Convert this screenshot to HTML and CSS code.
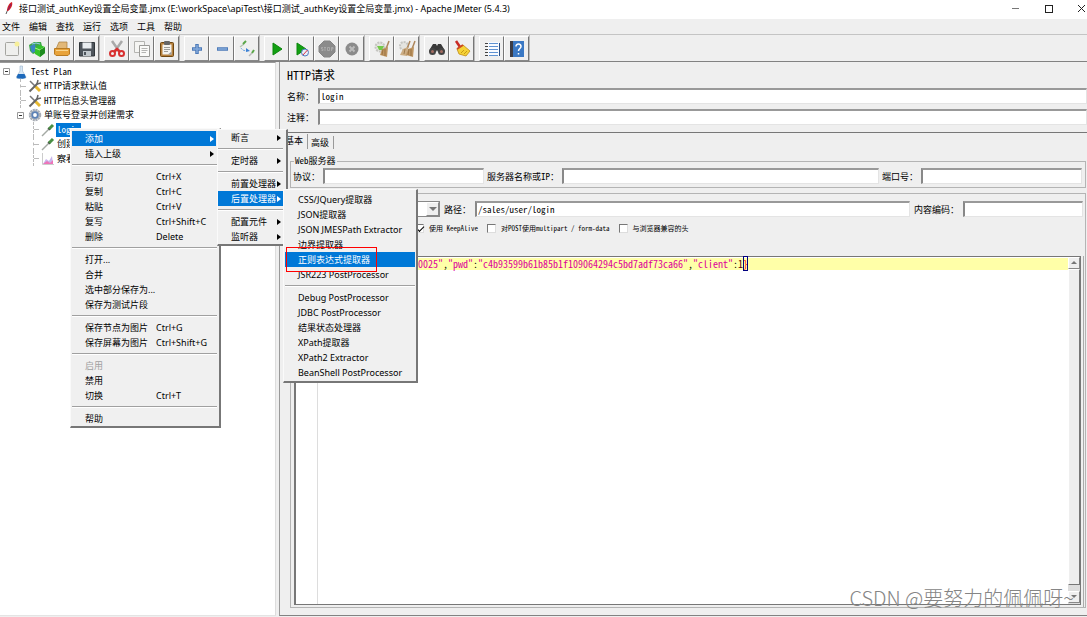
FILE: index.html
```html
<!DOCTYPE html>
<html lang="zh-CN">
<head>
<meta charset="utf-8">
<title>Apache JMeter (5.4.3)</title>
<link rel="stylesheet" href="styles.css">
</head>
<body>
<header class="titlebar">
  <svg class="feather" viewBox="0 0 10 14"><path d="M2 13L4 8" stroke="#555" fill="none"/><path d="M3 10C3 6 5 2 8 1C9 4 7 8 4 10Z" fill="#d22128"/><path d="M4 9L7 3" stroke="#6d2077" stroke-width=".8"/></svg>
  <h1 class="title">接口测试_authKey设置全局变量.jmx (E:\workSpace\apiTest\接口测试_authKey设置全局变量.jmx) - Apache JMeter (5.4.3)</h1>
  <div class="win-buttons">
    <button class="win" aria-label="最小化"><svg viewBox="0 0 9 9"><path d="M1 4.5H8" stroke="#777" fill="none"/></svg></button>
    <button class="win" aria-label="最大化"><svg viewBox="0 0 9 9"><rect x="1.500" y="1.500" width="7" height="7" stroke="#222" fill="none"/></svg></button>
    <button class="win" aria-label="关闭"><svg viewBox="0 0 9 9"><path d="M1 1L8 8M8 1L1 8" stroke="#222" fill="none"/></svg></button>
  </div>
</header>
<nav class="menubar">
  <button>文件</button><button>编辑</button><button>查找</button><button>运行</button><button>选项</button><button>工具</button><button>帮助</button>
</nav>
<div class="toolbar">
  <div class="group">
    <button class="tool" aria-label="新建"><svg viewBox="0 0 18 18"><rect x="2.500" y="2.500" width="13" height="13" rx="1" fill="#efefed" stroke="#a5a5a0"/><circle cx="14" cy="4" r="2.500" fill="#f7ef9a"/></svg></button>
    <button class="tool" aria-label="模板"><svg viewBox="0 0 18 18"><path d="M1 5L6 2L13 2L14 6L12 11L5 14L2 11Z" fill="#3fa648"/><path d="M2 6L7 4L8 11L4 13Z" fill="#3a86c4"/><path d="M4 4L8 3L12 4" stroke="#8fd0e8" fill="none"/><path d="M7 8L12 5L17 7V13L12 17L7 14Z" fill="#35c22a"/><path d="M7 8L12 10L17 7" stroke="#a9ee8e" fill="none"/><path d="M12 10L17 7V13L12 17Z" fill="#1f8c20"/></svg></button>
    <button class="tool" aria-label="打开"><svg viewBox="0 0 18 18"><path d="M3 9L6 2H14V10Z" fill="#e2b878" stroke="#a87c3c" stroke-width=".7"/><path d="M1.500 8.500H16.500V14L15 15.500H3L1.500 14Z" fill="#e8a33b" stroke="#b87b22"/><path d="M3 10.500H15" stroke="#f9d68f"/></svg></button>
    <button class="tool" aria-label="保存"><svg viewBox="0 0 18 18"><path d="M1.500 2.500H16.500V16H1.500Z" fill="#4e555c" stroke="#30363a"/><path d="M4.500 2.500H13.500V8.500H4.500Z" fill="#e9edf0"/><path d="M5 11H13V16H5Z" fill="#c1c8cd"/><path d="M6 12H8V15H6Z" fill="#4e555c"/></svg></button>
  </div>
  <div class="group">
    <button class="tool" aria-label="剪切"><svg viewBox="0 0 18 18"><path d="M4 1L11 11M14 1L7 11" stroke="#a9a9a9" stroke-width="2.500" fill="none"/><ellipse cx="4.500" cy="13.500" rx="2.500" ry="2.500" fill="none" stroke="#d83030" stroke-width="2"/><ellipse cx="13.500" cy="13.500" rx="2.500" ry="2.500" fill="none" stroke="#d83030" stroke-width="2"/><path d="M6 12L9 9L12 12" stroke="#d83030" stroke-width="2.500" fill="none"/></svg></button>
    <button class="tool" aria-label="复制"><svg viewBox="0 0 18 18"><path d="M1.500 1.500H11.500V12.500H1.500Z" fill="#f5f5f3" stroke="#b4b4b1"/><path d="M6.500 5.500H16.500V16.500H6.500Z" fill="#fafaf8" stroke="#9a9a97"/><path d="M8.500 8.500H14.500M8.500 10.500H14.500M8.500 12.500H13" stroke="#b4b4b2"/></svg></button>
    <button class="tool" aria-label="粘贴"><svg viewBox="0 0 18 18"><rect x="2.500" y="2.500" width="13" height="14" rx="1" fill="#b6803c" stroke="#6f4711"/><path d="M4.500 4.500H13.500V14.500H4.500Z" fill="#f4f3ef"/><rect x="6" y="1" width="6" height="4" rx="1" fill="#666"/><path d="M6 7.500H12M6 9.500H12M6 11.500H10" stroke="#9c9c99"/><path d="M10 14.500L13.500 11.500V14.500Z" fill="#999"/></svg></button>
  </div>
  <div class="group">
    <button class="tool" aria-label="展开"><svg viewBox="0 0 18 18"><path d="M9 4V14M4 9H14" stroke="#4c7ab8" stroke-width="3.500" fill="none"/><path d="M9 5V13M5 9H13" stroke="#84abdb" stroke-width="1.500" fill="none"/></svg></button>
    <button class="tool" aria-label="折叠"><svg viewBox="0 0 18 18"><path d="M4 9H15" stroke="#4c7ab8" stroke-width="3.500" fill="none"/><path d="M5 9H14" stroke="#84abdb" stroke-width="1.500" fill="none"/></svg></button>
    <button class="tool" aria-label="切换"><svg viewBox="0 0 18 18"><path d="M2 7L6 4" stroke="#b6c5b4" stroke-width="1.500"/><path d="M5 4L8 1" stroke="#5aa648" stroke-width="2"/><path d="M11 16L14 13" stroke="#b9b9b9" stroke-width="1.500"/><path d="M14 13L16 10" stroke="#5aa648" stroke-width="2"/><path d="M3 8C5 11 7 11 10 10" stroke="#6ba1e0" stroke-dasharray="2 1" fill="none"/><path d="M8 8L12 11L8 12Z" fill="#3b80d4"/></svg></button>
  </div>
  <div class="group">
    <button class="tool" aria-label="启动"><svg viewBox="0 0 18 18"><path d="M5 3L14 9L5 15Z" fill="#12a012" stroke="#0b860b"/></svg></button>
    <button class="tool" aria-label="无间隔启动"><svg viewBox="0 0 18 18"><path d="M4 3L13 9L4 15Z" fill="#12a012" stroke="#0b860b"/><circle cx="12" cy="12.500" r="3.500" fill="#e8eef8" stroke="#4e7ac0"/><path d="M10 15L14.500 10" stroke="#d34"/></svg></button>
    <button class="tool" aria-label="停止" disabled><svg viewBox="0 0 18 18"><path d="M6 1H12L17 6V12L12 17H6L1 12V6Z" fill="#8b8b8b" stroke="#858585"/><path d="M5 7.500H3.500V9H5V10.500H3.500M6 7.500H8M7 7.500V11M9.500 7.500H11.500V10.500H9.500ZM13.500 11V7.500H15V9H13.500" stroke="#b0b0b0" stroke-width=".8" fill="none"/></svg></button>
    <button class="tool" aria-label="关闭" disabled><svg viewBox="0 0 18 18"><circle cx="9" cy="9" r="6.500" fill="#8b8b8b"/><path d="M6.500 6.500L11.500 11.500M11.500 6.500L6.500 11.500" stroke="#bbb" stroke-width="2"/></svg></button>
  </div>
  <div class="group">
    <button class="tool" aria-label="清除"><svg viewBox="0 0 18 18"><circle cx="7" cy="7" r="4.500" fill="#e4e4e0" stroke="#c5c5c1" stroke-width="2" stroke-dasharray="2 1"/><path d="M16 1L13 9" stroke="#ad865b" stroke-width="1.500"/><path d="M9 9L15 7L14 17L7 15Z" fill="#be9562"/><path d="M10 9L9 15M12 9L12 16" stroke="#8c6537" stroke-width=".7"/><path d="M4 6L11 6L9 10L6 10Z" fill="#74c94a"/></svg></button>
    <button class="tool" aria-label="清除全部"><svg viewBox="0 0 18 18"><circle cx="6" cy="6" r="4" fill="#e4e4e0" stroke="#c5c5c1" stroke-width="2" stroke-dasharray="2 1"/><path d="M12 1L9 9M17 1L14 9" stroke="#ad865b" stroke-width="1.500"/><path d="M5 9L10 7L9 16L2 15Z" fill="#ccad84"/><path d="M10 9L16 7L15 17L8 15Z" fill="#be9562"/><path d="M7 9L6 14M11 9L10 15M13 9L13 16" stroke="#8c6537" stroke-width=".7"/></svg></button>
  </div>
  <div class="group">
    <button class="tool" aria-label="搜索"><svg viewBox="0 0 18 18"><path d="M2 9L5 4L8 4L9 6L10 4L13 4L16 9L17 12H10L9 10L8 12H1Z" fill="#393939"/><circle cx="4.500" cy="11.500" r="3.500" fill="#444"/><circle cx="13.500" cy="11.500" r="3.500" fill="#444"/><circle cx="4.500" cy="11.500" r="1.500" fill="#a66d62"/><circle cx="13.500" cy="11.500" r="1.500" fill="#a66d62"/></svg></button>
    <button class="tool" aria-label="重置搜索"><svg viewBox="0 0 18 18"><path d="M3 1L7 7" stroke="#c92a25" stroke-width="2.500"/><path d="M4 9L10 5L17 11L13 16L6 14Z" fill="#f5d236" stroke="#c08b17" stroke-width=".8"/><path d="M4 9L10 5" stroke="#ca4b20" stroke-width="2"/><path d="M8 13L11 10M11 14L14 11" stroke="#c79916"/></svg></button>
  </div>
  <div class="group">
    <button class="tool" aria-label="函数助手"><svg viewBox="0 0 18 18"><path d="M4 2H16V16H4Z" fill="#f9fbff"/><path d="M6 3.500H15M6 6.500H15M6 9.500H15M6 12.500H15M6 15.500H15" stroke="#5f92d2"/><path d="M2 3.500H5M2 6.500H5M2 9.500H5M2 12.500H5M2 15.500H5" stroke="#444"/><path d="M16.500 3V16" stroke="#284d83"/></svg></button>
    <button class="tool" aria-label="帮助"><svg viewBox="0 0 18 18"><path d="M2 1H16V17H2Z" fill="#3a78c4"/><path d="M2 1H5V17H2Z" fill="#3c3c45"/><path d="M8 6.500C8 3 13 3.500 13 6.500C13 8.500 10.500 8.500 10.500 11M10.500 13V14.500" stroke="#fff" stroke-width="1.500" fill="none"/></svg></button>
  </div>
</div>

<main class="main">
  <aside class="tree-pane">
    <ul class="tree">
      <li class="lv0"><svg class="toggle" viewBox="0 0 7 7"><path d="M.5 .5H6.500V6.500H.5Z" fill="#fff" stroke="#999"/><path d="M2 3.500H5" stroke="#333"/></svg><svg class="node" viewBox="0 0 14 14"><path d="M6 1H8.500V6L12 12Q12 13.500 10 13.500H4Q2 13.500 2.500 12L6 6Z" fill="#d8e8f6" stroke="#9ab2ca" stroke-width=".6"/><path d="M4 9H10.500L12 12.500Q10 14 7 13.500Q3 14 2.500 12Z" fill="#1d69bb"/></svg><span class="label">Test Plan</span></li>
      <li class="lv1"><i class="stub"></i><svg class="node" viewBox="0 0 14 14"><path d="M2 2L7 7" stroke="#777" stroke-width="1.500"/><path d="M7 7L12 12" stroke="#e6b830" stroke-width="3"/><path d="M1.500 12.500L10 4" stroke="#666" stroke-width="2"/><path d="M9 5L10 1M9 5L13 4" stroke="#666" stroke-width="1.500"/></svg><span class="label">HTTP请求默认值</span></li>
      <li class="lv1"><i class="stub"></i><svg class="node" viewBox="0 0 14 14"><path d="M2 2L7 7" stroke="#777" stroke-width="1.500"/><path d="M7 7L12 12" stroke="#e6b830" stroke-width="3"/><path d="M1.500 12.500L10 4" stroke="#666" stroke-width="2"/><path d="M9 5L10 1M9 5L13 4" stroke="#666" stroke-width="1.500"/></svg><span class="label">HTTP信息头管理器</span></li>
      <li class="lv1"><svg class="toggle" viewBox="0 0 7 7"><path d="M.5 .5H6.500V6.500H.5Z" fill="#fff" stroke="#999"/><path d="M2 3.500H5" stroke="#333"/></svg><svg class="node" viewBox="0 0 14 14"><circle cx="7" cy="7" r="5" fill="#c3c9d2" stroke="#a9aeb6" stroke-width="2.500" stroke-dasharray="2 .6"/><circle cx="7" cy="7" r="2.800" fill="#fff" stroke="#5d82b5" stroke-width="1.800"/></svg><span class="label">单账号登录并创建需求</span></li>
      <li class="lv2"><i class="stub"></i><svg class="node" viewBox="0 0 14 14"><path d="M1 13L8 6" stroke="#a4a9a4" stroke-width="1.500"/><path d="M7 5L9 7" stroke="#444" stroke-width="1.500"/><path d="M8 6L12 2" stroke="#4a8f44" stroke-width="3"/></svg><span class="label selected">login</span></li>
      <li class="lv2"><i class="stub"></i><svg class="node" viewBox="0 0 14 14"><path d="M1 13L8 6" stroke="#a4a9a4" stroke-width="1.500"/><path d="M7 5L9 7" stroke="#444" stroke-width="1.500"/><path d="M8 6L12 2" stroke="#4a8f44" stroke-width="3"/></svg><span class="label">创建</span></li>
      <li class="lv2"><i class="stub"></i><svg class="node" viewBox="0 0 14 14"><path d="M1.500 1V12.500H13" stroke="#ccc" fill="none"/><path d="M2 12L5 7L8 9L11 4L12 12Z" fill="#c9b5ec"/><path d="M2 12L6 9L9 11L12 8V12Z" fill="#ee74b8"/></svg><span class="label">察看</span></li>
    </ul>
  </aside>
  <section class="editor">
    <h2 class="heading">HTTP请求</h2>
    <div class="field"><label for="name">名称：</label><input id="name" value="login"></div>
    <div class="field"><label for="note">注释：</label><input id="note"></div>
    <div class="splitter"></div>
    <div class="tabs"><button class="tab active">基本</button><button class="tab">高级</button></div>
    <div class="config">
      <fieldset class="server">
        <legend>Web服务器</legend>
        <label for="proto">协议：</label><input id="proto" class="grow">
        <label for="host">服务器名称或IP：</label><input id="host" class="grow2">
        <label for="port">端口号：</label><input id="port" class="grow">
      </fieldset>
      <div class="request">
        <div class="request-row">
          <span class="combo"><select aria-label="方法"><option></option></select><span class="combo-arrow"></span></span>
          <label for="path">路径：</label><input id="path" class="grow" value="/sales/user/login">
          <label for="enc">内容编码：</label><input id="enc" class="encoding">
        </div>
        <div class="checks">
          <label><input type="checkbox" checked>使用 KeepAlive</label>
          <label><input type="checkbox">对POST使用multipart / form-data</label>
          <label><input type="checkbox">与浏览器兼容的头</label>
        </div>
        <div class="body-panel">
          <div class="code-box">
            <div class="gutter"></div>
            <pre class="code"><span class="str">0025"</span>,<span class="str">"pwd"</span>:<span class="str">"c4b93599b61b85b1f109064294c5bd7adf73ca66"</span>,<span class="str">"client"</span>:<span class="num">1</span><span class="brace">}</span></pre>
            <div class="scroll"><span class="sbtn up"></span><span class="thumb"></span><span class="sbtn down"></span></div>
          </div>
        </div>
      </div>
    </div>
  </section>
</main>

<div class="popup context" role="menu">
  <button class="item on sub">添加</button>
  <button class="item sub">插入上级</button>
  <hr>
  <button class="item">剪切<kbd>Ctrl+X</kbd></button>
  <button class="item">复制<kbd>Ctrl+C</kbd></button>
  <button class="item">粘贴<kbd>Ctrl+V</kbd></button>
  <button class="item">复写<kbd>Ctrl+Shift+C</kbd></button>
  <button class="item">删除<kbd>Delete</kbd></button>
  <hr>
  <button class="item">打开...</button>
  <button class="item">合并</button>
  <button class="item">选中部分保存为...</button>
  <button class="item">保存为测试片段</button>
  <hr>
  <button class="item">保存节点为图片<kbd>Ctrl+G</kbd></button>
  <button class="item">保存屏幕为图片<kbd>Ctrl+Shift+G</kbd></button>
  <hr>
  <button class="item" disabled>启用</button>
  <button class="item">禁用</button>
  <button class="item">切换<kbd>Ctrl+T</kbd></button>
  <hr>
  <button class="item">帮助</button>
</div>
<div class="popup add" role="menu">
  <button class="item sub">断言</button>
  <hr>
  <button class="item sub">定时器</button>
  <hr>
  <button class="item sub">前置处理器</button>
  <button class="item on sub">后置处理器</button>
  <hr>
  <button class="item sub">配置元件</button>
  <button class="item sub">监听器</button>
</div>
<div class="popup post" role="menu">
  <button class="item">CSS/JQuery提取器</button>
  <button class="item">JSON提取器</button>
  <button class="item">JSON JMESPath Extractor</button>
  <button class="item">边界提取器</button>
  <button class="item on">正则表达式提取器</button>
  <button class="item">JSR223 PostProcessor</button>
  <hr>
  <button class="item">Debug PostProcessor</button>
  <button class="item">JDBC PostProcessor</button>
  <button class="item">结果状态处理器</button>
  <button class="item">XPath提取器</button>
  <button class="item">XPath2 Extractor</button>
  <button class="item">BeanShell PostProcessor</button>
</div>
<div class="marker"></div>
<div class="watermark">CSDN @要努力的佩佩呀~</div>
</body>
</html>
```
FILE: styles.css
```css
* { box-sizing: border-box; }
html, body { margin: 0; height: 100%; }
body {
  display: flex;
  flex-direction: column;
  position: relative;
  overflow: hidden;
  background: #efefef;
  color: #000;
  font: 9px/15px "Noto Sans", "Noto Sans CJK SC", sans-serif;
}
button {
  margin: 0;
  padding: 0;
  border: 0;
  background: none;
  color: inherit;
  font: inherit;
  text-align: left;
  white-space: nowrap;
}
svg { display: block; flex: none; }

.titlebar {
  display: flex;
  align-items: center;
  flex: none;
  height: 19px;
  padding: 0 1px 3px 4px;
  background: #fff;
}
.feather { width: 10px; height: 14px; margin-right: 5px; }
.title { flex: 1; margin: 0; font-size: 9px; font-weight: 400; white-space: nowrap; }
.win-buttons { display: flex; gap: 24px; }
.win svg { width: 9px; height: 9px; }

.menubar {
  display: flex;
  flex: none;
  gap: 9px;
  height: 16px;
  padding-left: 2px;
  border-bottom: 1px solid #c4c4c4;
}

.toolbar {
  display: flex;
  flex: none;
  gap: 5px;
  height: 27px;
  border-bottom: 1px solid #828282;
}
.group { display: flex; border-right: 1px solid #bbb; margin-right: -1px; }
.group:first-child { margin-left: -1px; }
.tool {
  display: flex;
  align-items: center;
  justify-content: center;
  width: 25px;
  height: 25px;
  margin-top: 1px;
  border: 1px solid;
  border-color: #fff #777 #888 #fff;
}
.tool svg { width: 18px; height: 18px; }

.main { display: flex; flex: 1; min-height: 0; padding-bottom: 1px; background: #efefef; }
.tree-pane {
  flex: none;
  width: 276px;
  padding-top: 1px;
  background: #fff;
  border-top: 1px solid #999;
  border-right: 1px solid #ddd;
  border-bottom: 1px solid #e4e4e4;
}
.tree {
  margin: 0;
  padding: 0;
  list-style: none;
  font-family: "Noto Sans Mono CJK SC", "Noto Sans CJK SC", monospace;
  font-weight: 500;
  line-height: 14px;
}
.tree li { display: flex; align-items: center; height: 14px; white-space: nowrap; }
.tree li:nth-child(odd) { height: 15px; }
.lv0 { padding-left: 2px; }
.lv1 { padding-left: 16px; }
.lv2 { padding-left: 29px; }
.toggle { width: 7px; height: 7px; margin: 0 4px 0 1px; }
.node { width: 14px; height: 14px; margin-right: 1px; }
.lv0 .label { margin-left: 1px; }
.stub {
  flex: none;
  align-self: stretch;
  width: 8px;
  margin-left: 4px;
  border-left: 1px dashed #bbb;
  background: linear-gradient(#bbb, #bbb) 0 50% / 5px 1px no-repeat;
}
.label { padding: 0 1px; }
.selected { background: #0078d7; color: #fff; }

.editor {
  display: flex;
  flex-direction: column;
  flex: 1;
  min-width: 0;
  margin-left: 3px;
  padding-left: 7px;
  border-left: 1px solid #999;
  border-bottom: 1px solid #828282;
  font-family: "Noto Sans Mono CJK SC", "Noto Sans CJK SC", monospace;
}
.heading { margin: 0; font-size: 12px; font-weight: 400; line-height: 26px; }
.field { display: flex; align-items: center; height: 16px; margin-bottom: 5px; }
.field label { width: 31px; white-space: nowrap; }
.editor input:not([type]) {
  min-width: 0;
  height: 16px;
  margin: 0;
  padding: 0 1px;
  border: 1px solid;
  border-width: 2px 1px 1px 2px;
  border-color: #999 #e4e4e4 #e4e4e4 #888;
  border-radius: 0;
  background: #fff;
  font: inherit;
  font-weight: 500;
}
.field input { flex: 1; }
.splitter { height: 3px; border-bottom: 1px solid #777; }
.tabs { display: flex; align-items: flex-end; height: 16px; font-size: 9px; }
.tab { padding-right: 4px; border-right: 1px solid #999; line-height: 13px; }
.tab + .tab { padding-left: 3px; }
.tab.active { padding-bottom: 2px; margin-left: -2px; }
.config { display: flex; flex-direction: column; flex: 1; min-height: 0; padding: 7px 1px 0 3px; }
.server {
  display: flex;
  align-items: center;
  gap: 3px;
  margin: 0;
  min-width: 0;
  padding: 2px 3px 3px 2px;
  border: 1px solid #b4b4b4;
  white-space: nowrap;
}
.server legend { margin-left: 1px; padding: 0 1px; line-height: 10px; }
.grow { flex: 1; width: 0; }
.grow2 { flex: 2; width: 0; }
.request {
  display: flex;
  flex-direction: column;
  flex: 1;
  min-height: 0;
  margin-top: 5px;
  margin-bottom: 7px;
  border: 1px solid #b4b4b4;
}
.request-row { display: flex; align-items: center; gap: 4px; padding: 7px 2px 0 4px; white-space: nowrap; }
.encoding { width: 120px; }
.combo { display: block; position: relative; width: 145px; height: 16px; border: 1px solid #888; background: #fff; }
.combo select { display: block; width: 100%; height: 100%; appearance: none; border: 0; background: #fff; font: inherit; }
.combo-arrow { position: absolute; top: 0; right: 0; width: 13px; height: 14px; border: 1px solid; border-color: #fff #888 #888 #fff; background: #efefef; }
.combo-arrow::after { content: ""; display: block; margin: 4px 2px; border: 4px solid transparent; border-top-color: #777; border-bottom: 0; }
.checks { display: flex; gap: 9px; height: 15px; margin: 4px 0 20px 124px; font-size: 7px; font-weight: 500; white-space: nowrap; }
.checks label { display: flex; align-items: center; white-space: pre; }
.checks input { appearance: none; width: 9px; height: 9px; margin: 0 5px 0 0; border: 1px solid; border-color: #777 #ddd #ddd #777; background: #fff; }
.checks input:checked::after { content: ""; display: block; width: 6px; height: 3px; margin: 1px; border: solid #000; border-width: 0 0 1px 1px; transform: rotate(-45deg); }
.body-panel { display: flex; flex: 1; min-height: 0; padding: 0 2px 2px 3px; border-right: 1px solid #aaa; margin-right: 1px; }
.code-box { display: flex; flex: 1; min-width: 0; border: 1px solid #777; border-width: 1px 1px 1px 2px; background: #fff; }
.gutter { width: 22px; border-right: 1px solid #ddd; }
.code {
  flex: 1;
  min-width: 0;
  height: 12px;
  margin: 1px 0 0;
  padding-left: 100px;
  background: #ffffa8;
  font: 500 10px/12px "Noto Sans Mono CJK SC", "Liberation Mono", monospace;
}
.str { color: #dc009c; }
.num { color: #640000; }
.brace { color: #f00; outline: 1px solid #000080; outline-offset: -1px; }
.scroll { display: flex; flex-direction: column; width: 12px; padding-bottom: 1px; background: #ddd; }
.sbtn { height: 12px; border: 1px solid; border-color: #fff #888 #888 #fff; background: #efefef; }
.sbtn::after { content: ""; display: block; margin: 3px 2px; border: 3px solid transparent; }
.up::after { border-top: 0; border-bottom-color: #777; }
.down::after { border-bottom: 0; border-top-color: #777; }
.thumb { flex: 1; margin-bottom: 6px; border: 1px solid; border-color: #fff #777 #777 #fff; background: #efefef; }

.popup {
  position: absolute;
  border: 1px solid;
  border-width: 1px 2px 2px 1px;
  border-color: #fafafa #777 #777 #fafafa;
  background: #f0f0f0;
}
.popup hr { height: 2px; margin: 3px 0; border: solid; border-width: 1px 0; border-color: #a0a0a0 #fff #fff; }
.item { display: flex; align-items: center; position: relative; width: 100%; height: 15px; padding-left: 13px; }
.item:disabled { color: #a0a0a0; }
.item kbd { position: absolute; left: 84px; font: inherit; }
.on { background: #0078d7; color: #fff; }
.sub::after { content: ""; position: absolute; right: 2px; border: 3px solid transparent; border-left: 4px solid; border-right: 0; }
.context { left: 70px; top: 128px; width: 151px; padding: 2px 2px 0 1px; }
.context .sub { width: 144px; }
.add { left: 217px; top: 129px; width: 71px; padding: 0 3px 0 0; }
.post { left: 283px; top: 189px; width: 135px; padding: 2px 1px 1px; }
.marker { position: absolute; left: 286px; top: 247px; width: 91px; height: 25px; border: 1px solid #f00; }
.watermark {
  position: absolute;
  right: 13px;
  bottom: 6px;
  color: #858585;
  font: 300 20px/26px "Noto Sans CJK SC", sans-serif;
}
```
